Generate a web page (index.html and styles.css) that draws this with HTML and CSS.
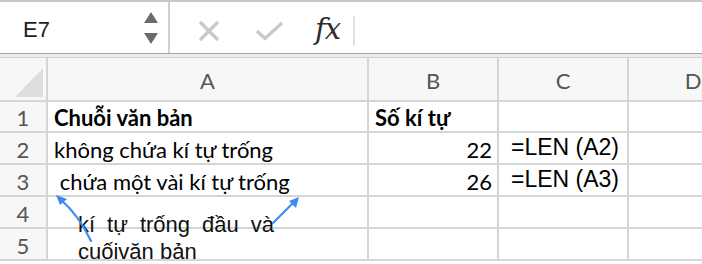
FILE: index.html
```html
<!DOCTYPE html>
<html lang="vi">
<head>
    <meta charset="UTF-8">
    <title>LEN</title>
    <link rel="stylesheet" href="styles.css">
</head>
<body>
    <div class="sheet">
        <div class="toolbar">
            <div class="namebox">
                <span class="ref">E7</span>
                <span class="spin"><i class="up"></i><i class="down"></i></span>
            </div>
            <div class="actions">
                <svg class="cancel" width="22" height="22" viewBox="0 0 22 22">
                    <path d="M2 2 L20 20 M20 2 L2 20" stroke="#c9c9c9" stroke-width="3.2" fill="none"/>
                </svg>
                <svg class="enter" width="29" height="20" viewBox="0 0 29 20">
                    <path d="M2 10 L10 17.5 L27 2" stroke="#c9c9c9" stroke-width="3.4" fill="none"/>
                </svg>
                <span class="fx">fx</span>
                <span class="sep"></span>
            </div>
        </div>
        <div class="strip"></div>

        <div class="grid">
            <div class="corner"></div>
            <div class="col-head">A</div>
            <div class="col-head">B</div>
            <div class="col-head">C</div>
            <div class="col-head">D</div>

            <div class="row-head">1</div>
            <div class="cell bold">Chuỗi văn bản</div>
            <div class="cell bold">Số kí tự</div>
            <div class="cell"></div>
            <div class="cell"></div>

            <div class="row-head">2</div>
            <div class="cell">không chứa kí tự trống</div>
            <div class="cell num">22</div>
            <div class="cell formula">=LEN (A2)</div>
            <div class="cell"></div>

            <div class="row-head">3</div>
            <div class="cell"> chứa một vài kí tự trống </div>
            <div class="cell num">26</div>
            <div class="cell formula">=LEN (A3)</div>
            <div class="cell"></div>

            <div class="row-head">4</div>
            <div class="cell"></div>
            <div class="cell"></div>
            <div class="cell"></div>
            <div class="cell"></div>

            <div class="row-head">5</div>
            <div class="cell"></div>
            <div class="cell"></div>
            <div class="cell"></div>
            <div class="cell"></div>
        </div>

        <!-- text box and arrows drawn over the cells -->
        <div class="note">kí tự trống đầu và cuốivăn bản</div>
        <svg class="arrows" width="702" height="264" viewBox="0 0 702 264">
            <g stroke="#3d8af5" stroke-width="2.2" fill="none" stroke-linecap="round">
                <path d="M91 241 Q78 214 60 199"/>
                <path d="M273 223 L295 201"/>
            </g>
            <g fill="#3d8af5">
                <path d="M56 195 L67 199 L60 205 Z"/>
                <path d="M299 197 L296 208 L289 201 Z"/>
            </g>
        </svg>
    </div>
</body>
</html>
```

FILE: styles.css
```css
body {
    margin: 0;
    background-color: #fff;
    overflow: hidden;
}

.sheet {
    position: relative;
    width: 702px;
    height: 264px;
    overflow: hidden;
}

/* formula bar */
.toolbar {
    display: flex;
    height: 51px;
    border-top: 2px solid #c8c8c8;
    border-bottom: 1px solid #a3a3a3;
    background-color: #fff;
}

.namebox {
    display: flex;
    align-items: center;
    justify-content: space-between;
    width: 170px;
    padding: 0 10px 0 23px;
    box-sizing: border-box;
    border-right: 2px solid #d0d0d0;
}

.ref {
    font-family: "Liberation Sans", Arial, sans-serif;
    font-size: 22px;
    color: #1e1e1e;
    margin-top: 4px;
}

.spin {
    display: flex;
    flex-direction: column;
    gap: 10px;
    margin-top: 1px;
}

.spin i {
    display: block;
    width: 0;
    height: 0;
    border-left: 7px solid transparent;
    border-right: 7px solid transparent;
}

.spin .up {
    border-bottom: 11px solid #6c6c6c;
}

.spin .down {
    border-top: 11px solid #6c6c6c;
}

.actions {
    display: flex;
    align-items: center;
    padding-left: 28px;
}

.cancel {
    margin-top: 6px;
}

.enter {
    margin-left: 35px;
    margin-top: 6px;
}

.fx {
    margin-left: 31px;
    font-family: "DejaVu Serif", "Liberation Serif", serif;
    font-style: italic;
    font-size: 29px;
    color: #2c2c2c;
    letter-spacing: -1px;
    margin-top: 2px;
}

.sep {
    width: 2px;
    height: 30px;
    margin-left: 13px;
    margin-top: 6px;
    background-color: #e2e2e2;
}

.strip {
    height: 3px;
    background-color: #ebebeb;
    border-bottom: 1px solid #cfcfcf;
}

/* cells */
.grid {
    display: grid;
    grid-template-columns: 46px 319px 128px 128px 128px;
    grid-template-rows: 42px 29px 30px 30px 30px 30px;
    gap: 2px;
    padding-bottom: 2px;
    background-color: #d5d5d5;
    font-family: Lato, "Open Sans", sans-serif;
    font-size: 22px;
    color: #000;
}

.corner {
    position: relative;
    background-color: #f7f7f7;
}

.corner::after {
    content: "";
    position: absolute;
    right: 3px;
    bottom: 3px;
    width: 28px;
    height: 29px;
    background-color: #dedede;
    clip-path: polygon(100% 0, 100% 100%, 0 100%);
}

.col-head,
.row-head {
    display: flex;
    align-items: center;
    justify-content: center;
    background-color: #f7f7f7;
    color: #555;
    font-size: 22px;
    line-height: 24px;
}

.col-head {
    padding-top: 3px;
}

.row-head {
    align-items: flex-end;
    padding-bottom: 1px;
}

.cell {
    display: flex;
    align-items: flex-end;
    padding: 0 6px 0;
    background-color: #fff;
    white-space: pre;
    line-height: 26px;
}

.bold {
    font-weight: bold;
}

.num {
    justify-content: flex-end;
    padding-right: 5px;
}

.formula {
    padding-left: 12px;
    font-family: "Liberation Sans", Arial, sans-serif;
    font-size: 23px;
    line-height: 26px;
    padding-bottom: 3px;
}

/* overlay annotation */
.note {
    position: absolute;
    left: 78px;
    top: 211px;
    width: 196px;
    font-family: "Liberation Sans", Arial, sans-serif;
    font-size: 22px;
    line-height: 27px;
    text-align: justify;
    color: #111;
}

.arrows {
    position: absolute;
    left: 0;
    top: 0;
    pointer-events: none;
}
```
